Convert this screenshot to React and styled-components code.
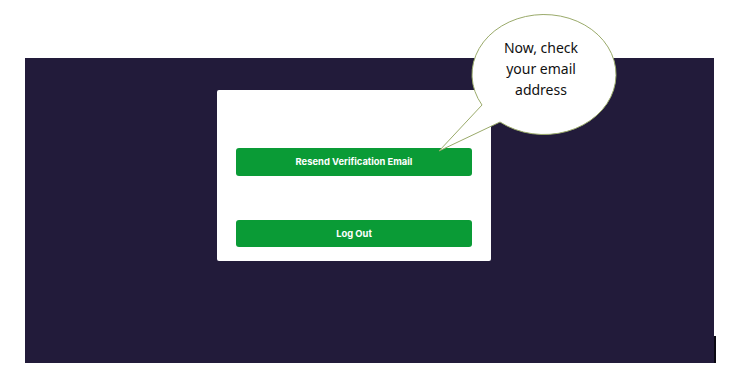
import styled, { createGlobalStyle } from "styled-components";

const GlobalStyle = createGlobalStyle`
  html, body {
    margin: 0;
    padding: 0;
    background: #ffffff;
  }
`;

export default function App() {
  return (
    <>
      <GlobalStyle />
      <Page>
        <Panel>
          <Card>
            <ActionButton type="button">Resend Verification Email</ActionButton>
            <ActionButton type="button">Log Out</ActionButton>
          </Card>
        </Panel>
        <Callout>
          <svg width="190" height="160" viewBox="0 0 190 160">
            {/* bubble outline with tail, origin at (430, 8) */}
            <path
              d="M52 97
                 A72 60 0 1 1 70 114
                 L9 143
                 Z"
              fill="#ffffff"
              stroke="#9aaa6a"
              strokeWidth="1"
            />
          </svg>
          <CalloutText>
            Now, check
            <br />
            your email
            <br />
            address
          </CalloutText>
        </Callout>
      </Page>
    </>
  );
}

const Page = styled.div`
  position: relative;
  width: 732px;
  height: 379px;
  padding: 58px 0 0 25px;
  box-sizing: border-box;
`;

const Panel = styled.div`
  position: relative;
  width: 689px;
  height: 305px;
  background: #221b3a;
  padding: 32px 0 0 192px;
  box-sizing: border-box;

  &::after {
    content: "";
    position: absolute;
    right: -2px;
    bottom: 0;
    width: 2px;
    height: 27px;
    background: #0a0812;
  }
`;

const Card = styled.div`
  width: 274px;
  height: 171px;
  background: #ffffff;
  border-radius: 2px;
  padding: 58px 19px 14px;
  box-sizing: border-box;
  display: flex;
  flex-direction: column;
  gap: 44px;
`;

const ActionButton = styled.button`
  height: 28px;
  width: 100%;
  border: none;
  border-radius: 3px;
  background: #0a9b36;
  color: #ffffff;
  font-family: Inter, "Noto Sans", sans-serif;
  font-weight: 700;
  font-size: 9.4px;
  padding: 0;
  cursor: pointer;
`;

const Callout = styled.div`
  position: absolute;
  left: 430px;
  top: 8px;
  width: 190px;
  height: 160px;

  svg {
    position: absolute;
    left: 0;
    top: 0;
  }
`;

const CalloutText = styled.div`
  position: absolute;
  left: 51px;
  top: 29px;
  width: 120px;
  text-align: center;
  font-family: "Noto Sans", "Open Sans", sans-serif;
  font-size: 14px;
  line-height: 21px;
  color: #111111;
`;
